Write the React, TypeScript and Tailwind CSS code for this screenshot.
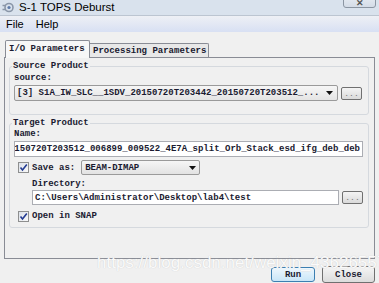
import React from "react";

const mono = "font-['Liberation_Mono',monospace] font-bold text-[9px] leading-[10px] text-[#1a1a30]";

function Check() {
  return (
    <div className="w-[11px] h-[11px] border border-[#8e8f8f] bg-linear-to-br from-[#dce1e9] to-[#f9f9f9] flex items-center justify-center shrink-0">
      <svg width="9" height="9" viewBox="0 0 9 9">
        <path d="M1.5 4.5 L3.5 7 L7.8 1.5" stroke="#233b92" strokeWidth="1.6" fill="none" />
      </svg>
    </div>
  );
}

function Dots() {
  return (
    <div className="w-[21px] h-[13px] border border-[#707070] rounded-[2px] bg-linear-to-b from-[#f4f4f4] to-[#dadada] flex items-end justify-center pb-[2px] shrink-0">
      <span className="font-['Liberation_Mono',monospace] text-[8px] leading-[6px] text-[#777]">...</span>
    </div>
  );
}

function Arrow() {
  return (
    <svg width="7" height="4" viewBox="0 0 7 4" className="shrink-0">
      <path d="M0 0 L7 0 L3.5 4 Z" fill="#111" />
    </svg>
  );
}

export default function App() {
  return (
    <div className="relative w-[379px] h-[283px] overflow-hidden bg-[#f0f0f0] flex flex-col">
      {/* title bar */}
      <div className="relative h-[15px] bg-[#d9e2ed] flex items-center pl-[2px] shrink-0">
        <svg width="12" height="11" viewBox="0 0 12 11" className="shrink-0">
          <circle cx="7" cy="5.5" r="4" fill="none" stroke="#8a96a8" strokeWidth="1.6" />
          <circle cx="7" cy="5.5" r="1.6" fill="#5d7aa8" />
          <path d="M0.5 3.5 L4 3.5 M0.5 7.5 L4 7.5" stroke="#8a96a8" strokeWidth="1.4" />
        </svg>
        <span className="ml-[5px] font-['Liberation_Sans',sans-serif] text-[11.5px] leading-none text-black">S-1 TOPS Deburst</span>
        <div className="absolute right-[3px] top-[-6px] w-[33px] h-[14px] border border-[#8b95a2] rounded-b-[3px] bg-linear-to-b from-[#e9eef4] to-[#d4dce7] flex items-end justify-center">
          <span className="font-['Liberation_Sans',sans-serif] text-[9px] leading-[8px] text-[#555] font-bold">✕</span>
        </div>
      </div>
      {/* menu bar */}
      <div className="h-[17px] border-t border-[#bcc5d1] bg-linear-to-b from-[#eef0f5] to-[#d8e0f3] flex items-center gap-[12px] pl-[6px] shrink-0 font-['Liberation_Sans',sans-serif] text-[11px] leading-none text-black">
        <span>File</span>
        <span>Help</span>
      </div>
      {/* tabs */}
      <div className="mt-[8px] px-[5px] flex items-end h-[17px] shrink-0">
        <div className={`relative z-10 -mb-px h-[18px] w-[85px] border border-b-0 border-[#898c95] bg-[#f7f7f7] rounded-t-[2px] pl-[3px] pt-[3px] ${mono}`}>
          I/O Parameters
        </div>
        <div className={`h-[14px] w-[119px] border border-l-0 border-b-0 border-[#898c95] bg-[#e8e8e8] rounded-tr-[2px] pl-[3px] pt-[2px] ${mono}`}>
          Processing Parameters
        </div>
      </div>
      {/* panel */}
      <div className="mx-[4px] h-[202px] border border-[#898c95] bg-[#f0f0f0] pl-[4px] pr-[5px] flex flex-col shrink-0 min-w-0">
        <fieldset className="mt-[3px] min-w-0 border border-[#d5d9de] rounded-[3px] pl-[4px] pr-[6px] pb-[13px] flex flex-col">
          <legend className={`ml-[-2px] px-[1px] ${mono}`}>Source Product</legend>
          <div className={`mt-[2px] ${mono}`}>source:</div>
          <div className="mt-[2px] flex items-center gap-[3px] min-w-0">
            <div className="h-[16px] flex-1 min-w-0 border border-[#9a9a9a] rounded-[2px] bg-linear-to-b from-[#f6f6f6] to-[#e4e4e4] flex items-center pl-[2px] pr-[4px]">
              <span className={`flex-1 min-w-0 whitespace-nowrap overflow-hidden ${mono}`}>[3] S1A_IW_SLC__1SDV_20150720T203442_20150720T203512_...</span>
              <Arrow />
            </div>
            <Dots />
          </div>
        </fieldset>
        <fieldset className="mt-[3px] min-w-0 border border-[#d5d9de] rounded-[3px] pl-[4px] pr-[5px] pb-[5px] flex flex-col">
          <legend className={`ml-[-2px] px-[1px] ${mono}`}>Target Product</legend>
          <div className={`mt-[1px] ${mono}`}>Name:</div>
          <div className="mt-[2px] h-[16px] min-w-0 border border-[#abadb3] bg-white flex items-center justify-end overflow-hidden pr-[2px]">
            <span className={`shrink-0 whitespace-nowrap ${mono}`}>S1A_IW_SLC__1SDV_20150720T203442_20150720T203512_006899_009522_4E7A_split_Orb_Stack_esd_ifg_deb_deb</span>
          </div>
          <div className="mt-[3px] flex items-center pl-[4px] h-[15px]">
            <Check />
            <span className={`ml-[3px] ${mono}`}>Save as:</span>
            <div className="ml-[6px] h-[15px] w-[119px] border border-[#9a9a9a] rounded-[2px] bg-linear-to-b from-[#f6f6f6] to-[#e2e2e2] flex items-center pl-[3px] pr-[3px]">
              <span className={`flex-1 ${mono}`}>BEAM-DIMAP</span>
              <Arrow />
            </div>
          </div>
          <div className={`mt-[4px] ml-[18px] ${mono}`}>Directory:</div>
          <div className="mt-[1px] ml-[18px] flex items-center gap-[3px] min-w-0">
            <div className="h-[15px] flex-1 min-w-0 overflow-hidden border border-[#abadb3] bg-white flex items-center pl-[2px]">
              <span className={`whitespace-nowrap ${mono}`}>C:\Users\Administrator\Desktop\lab4\test</span>
            </div>
            <Dots />
          </div>
          <div className="mt-[5px] flex items-center pl-[4px] h-[12px]">
            <Check />
            <span className={`ml-[3px] ${mono}`}>Open in SNAP</span>
          </div>
        </fieldset>
      </div>
      {/* buttons */}
      <div className="mt-[7px] pr-[4px] flex items-center justify-end gap-[7px]">
        <div className={`h-[15px] w-[44px] border border-[#3c7fb1] rounded-[3px] bg-linear-to-b from-[#eef7fd] to-[#c9e6f8] flex items-center justify-center ${mono}`}>
          Run
        </div>
        <div className={`h-[17px] w-[53px] border border-[#707070] rounded-[3px] bg-linear-to-b from-[#f5f5f5] to-[#dcdcdc] flex items-center justify-center ${mono}`}>
          Close
        </div>
      </div>
      {/* watermark */}
      <div className="absolute left-[97px] top-[254px] font-['Liberation_Sans',sans-serif] text-[17px] leading-none text-[#fafafa] [text-shadow:0_0_1px_#c4c4c4] whitespace-nowrap pointer-events-none">
        https://blog.csdn.net/weixin_43626557
      </div>
    </div>
  );
}
